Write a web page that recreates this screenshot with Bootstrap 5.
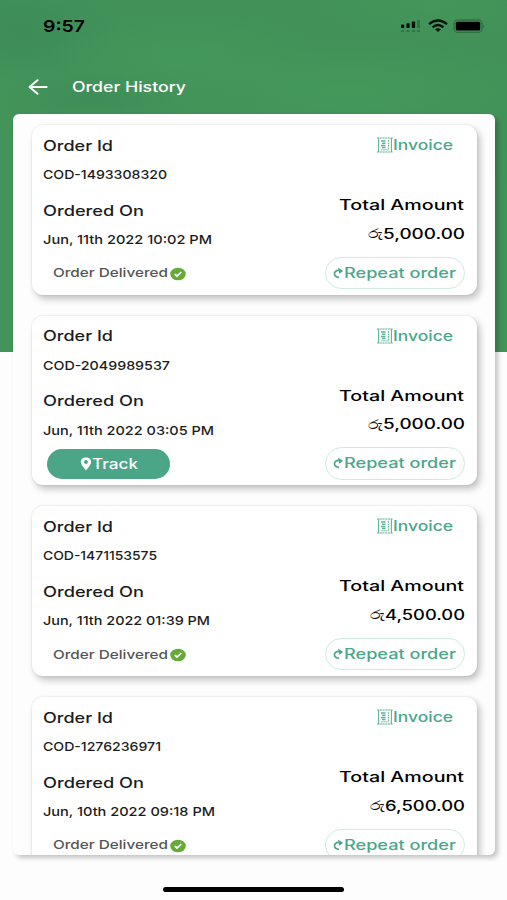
<!DOCTYPE html>
<html lang="en">
<head>
<meta charset="utf-8">
<meta name="viewport" content="width=device-width, initial-scale=1">
<title>Order History</title>
<link href="https://cdn.jsdelivr.net/npm/bootstrap@5.3.0/dist/css/bootstrap.min.css" rel="stylesheet">
<style>
body{height:900px;color:#1c1c1c;font-family:Inter,"Noto Sans",sans-serif;
  background:
   linear-gradient(#fdfdfd,#fdfdfd) 0 352px/100% 548px no-repeat,
   linear-gradient(191deg,rgba(52,130,88,.12) 0 15%,transparent 19%),
   radial-gradient(ellipse 140px 45px at 185px 58px,rgba(74,160,92,.5),transparent),
   radial-gradient(ellipse 190px 50px at 350px 92px,rgba(74,160,92,.6),transparent),
   radial-gradient(ellipse 110px 30px at 430px 4px,rgba(74,160,92,.4),transparent),
   radial-gradient(ellipse 100px 50px at 20px 30px,rgba(58,132,88,.4),transparent),
   radial-gradient(ellipse 90px 30px at 90px 100px,rgba(58,132,88,.4),transparent),
   #439459;}
.status-row{height:52px;padding:0 22px 0 43px}
.title-row{height:62px;padding:7px 0 0 28px}
.panel{height:741px;margin:0 12px 0 13px;padding:11px 18px 0 19px;background:#fdfdfd;border-radius:6px;box-shadow:3px 3px 5px rgba(0,0,0,.23)}
.order{height:169.5px;margin-bottom:21.2px;padding:8px 12px 0 11.3px;border-radius:11px;background:#fff;box-shadow:3px 4px 7px rgba(0,0,0,.24),0 0 2px rgba(0,0,0,.12)}
.ln{display:flex;align-items:center;white-space:nowrap}
.fit{display:inline-block;transform-origin:0 50%;white-space:nowrap;line-height:1}
.t14{font-size:14px;font-weight:500}
.t12{font-size:12.3px;font-weight:500}
.teal{color:#4ba68a}
.h22{height:22px}.h25{height:25px}.h34{height:34px}.h37{height:37px}.h35{height:35px}.h24{height:24px}
.state{margin-top:5.5px}
.invoice{width:88px}
.total{width:126px;margin-top:37px}
.pill{height:32.5px;border-radius:17px;padding:0}
.repeat{width:140px;border:1px solid #cfe9e3;padding-left:7px;margin-top:5.5px}
.track{width:123px;height:30px;margin-left:4px;background:#4ba587;color:#fff;padding-left:32px}
.delivered{color:#555;padding-left:10px}
.tick{margin-left:2px}
.bottom-bar{width:181px;height:5px;margin-top:32px;background:#000}
</style>
</head>
<body class="overflow-hidden m-0">
<header>
  <div class="status-row d-flex align-items-center justify-content-between text-black">
    <span class="ln"><span class="fit fw-semibold" data-w="42" style="font-size:16.5px">9:57</span></span>
    <svg width="86" height="20" viewBox="0 0 86 20">
      <g fill="#041008"><rect x="2" y="8.6" width="3.3" height="3.4" rx=".8"/><rect x="7.4" y="7.3" width="3.3" height="4.7" rx=".8"/><rect x="12.8" y="5.5" width="3.3" height="6.5" rx=".8"/></g>
      <g fill="#28653c" opacity=".65"><rect x="18" y="4" width="3" height="8" rx=".8"/><rect x="2" y="14" width="3.3" height="2" rx=".8"/><rect x="7.4" y="14" width="3.3" height="2" rx=".8"/><rect x="12.800" y="14" width="3.3" height="2" rx=".8"/><rect x="18" y="14" width="3" height="2" rx=".8"/></g>
      <g fill="none" stroke="#041008" stroke-width="2.3"><path d="M30 8.2Q39 0.8 48 8.2"/><path d="M33.5 11.3Q39 6.8 44.5 11.3"/></g><path d="M36 13.300Q39 11 42 13.300L39 16z" fill="#041008"/>
      <rect x="55" y="4" width="28" height="12.400" rx="4" fill="none" stroke="#2f7044" stroke-width="1.300"/><rect x="56.800" y="5.800" width="24.400" height="8.800" rx="1.500" fill="#000"/><path d="M84.200 8.300q2 1.800 0 3.800z" fill="#2f7044"/>
    </svg>
  </div>
  <div class="title-row d-flex align-items-center text-white">
    <svg class="me-4" width="20" height="16" viewBox="0 0 20 16" fill="none" stroke="#fff" stroke-width="2" stroke-linecap="round" stroke-linejoin="round"><path d="M9.500 1.200 1.600 8l7.900 6.800M1.800 8H18.600"/></svg>
    <span class="fit t14" data-w="114">Order History</span>
  </div>
</header>
<main class="panel overflow-hidden" id="orders"></main>
<div class="bottom-bar rounded-pill mx-auto"></div>

<template id="card">
  <article class="order d-flex justify-content-between">
    <div>
      <div class="ln h25"><span class="fit t14" data-w="70">Order Id</span></div>
      <div class="ln h34"><span class="fit t12 code"></span></div>
      <div class="ln h37"><span class="fit t14" data-w="101">Ordered On</span></div>
      <div class="ln h22"><span class="fit t12 date"></span></div>
      <div class="ln h34 state"></div>
    </div>
    <div class="d-flex flex-column align-items-end">
      <div class="ln h24 teal invoice">
        <svg width="16" height="16" viewBox="0 0 16 16" fill="none" stroke="#5fb399"><path d="M0 1h16M0 15h16" stroke-dasharray="2.200 .5"/><path d="M1.600 1v14M14.400 1v14" stroke-width="1.100"/><path d="M4 4h4.500M5 6.200h3.500M4 8.400h4.500M5 10.600h3.500" stroke-width="1.500"/><path d="M11.500 3.300v8.500" stroke-dasharray="1.500 .9" stroke-width="1.300"/><path d="M3.800 12.800h8.500" stroke-width=".7"/></svg>
        <span class="fit t14 ps-0" data-w="60">Invoice</span>
      </div>
      <div class="ln h22 total"><span class="fit t14 text-black" data-w="125">Total Amount</span></div>
      <div class="ln h35 text-black sum"><span class="fit" style="font-size:13px" data-w="15">රු</span><span class="fit t14 amount"></span></div>
      <button class="btn pill repeat ln teal" type="button">
        <svg width="11" height="12" viewBox="0 0 11 12"><path d="M6 10.300C-.2 10.300.2 3.100 5.800 3.400" fill="none" stroke="#4ba68a" stroke-width="1.700"/><path d="M5 .5 10.200 3.900 6.300 6.800z" fill="#4ba68a"/></svg>
        <span class="fit t14" data-w="112">Repeat order</span>
      </button>
    </div>
  </article>
</template>
<script src="https://cdn.jsdelivr.net/npm/bootstrap@5.3.0/dist/js/bootstrap.bundle.min.js"></script>
<script>
const orders=[
 {code:['COD-1493308320',124],date:['Jun, 11th 2022 10:02 PM',169],amount:['5,000.00',82],done:true},
 {code:['COD-2049989537',127],date:['Jun, 11th 2022 03:05 PM',171],amount:['5,000.00',82],done:false},
 {code:['COD-1471153575',114],date:['Jun, 11th 2022 01:39 PM',167],amount:['4,500.00',80],done:true},
 {code:['COD-1276236971',118],date:['Jun, 10th 2022 09:18 PM',172],amount:['6,500.00',80],done:true}];
const delivered='<span class="delivered ln"><span class="fit t12" data-w="115">Order Delivered</span><svg class="tick" width="16" height="14" viewBox="0 0 16 14"><ellipse cx="8" cy="7" rx="7.8" ry="6.3" fill="#66aa3a"/><path d="M4.8 7.1 7 9l4.3-4" fill="none" stroke="#fff" stroke-width="1.7"/></svg></span>';
const track='<button type="button" class="btn pill track ln"><svg width="12" height="14" viewBox="0 0 12 14"><path fill="#fff" fill-rule="evenodd" d="M6 .5C2.8.5.8 2.6.8 5.1.8 8.2 6 13.5 6 13.5s5.2-5.3 5.2-8.4C11.2 2.6 9.2.5 6 .5zM6 3.1a1.9 1.9 0 1 1 0 3.8 1.9 1.9 0 0 1 0-3.8z"/></svg><span class="fit t14" data-w="46">Track</span></button>';
for(const o of orders){
  const c=document.getElementById('card').content.cloneNode(true);
  for(const k of ['code','date','amount']){const e=c.querySelector('.'+k);e.textContent=o[k][0];e.dataset.w=o[k][1];}
  c.querySelector('.sum').style.width=(o.amount[1]+15)+'px';
  c.querySelector('.state').innerHTML=o.done?delivered:track;
  document.getElementById('orders').append(c);
}
// Stretch each label horizontally to its wide-set width, reserving that width in the flow.
document.querySelectorAll('.fit').forEach(e=>{
  const n=e.getBoundingClientRect().width,w=+e.dataset.w;
  e.style.transform=`scaleX(${w/n})`;
  e.style.marginRight=(w-n)+'px';
});
</script>
</body>
</html>
